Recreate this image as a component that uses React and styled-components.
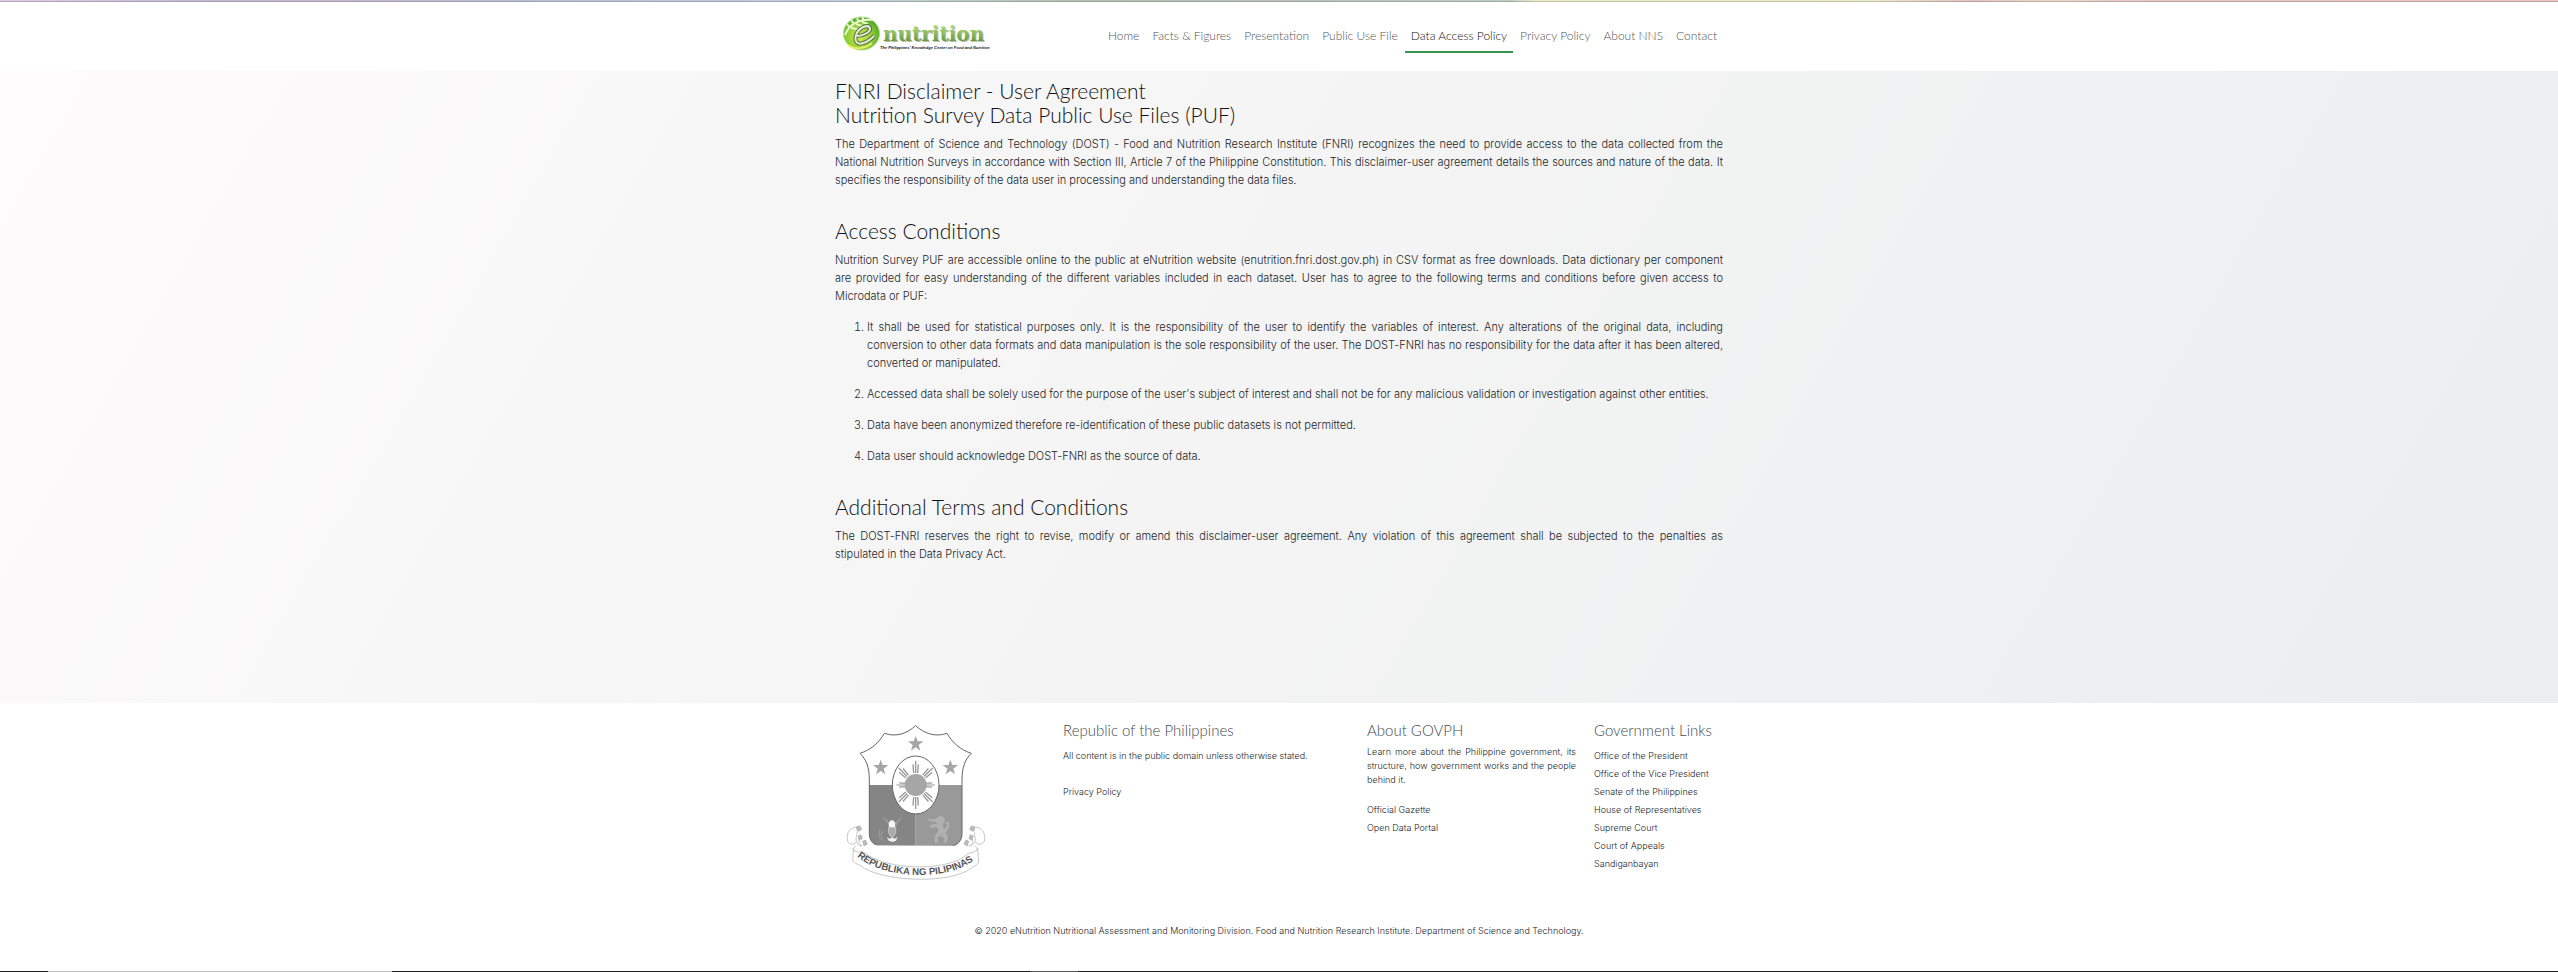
import React from "react";
import styled, { createGlobalStyle } from "styled-components";

const GlobalStyle = createGlobalStyle`
  *, *::before, *::after { box-sizing: border-box; }
  body {
    margin: 0;
    background: #fff;
    color: #212529;
    font-family: "Inter", "Open Sans", sans-serif;
    font-size: 11px;
    font-weight: 300;
    line-height: 18px;
  }
`;

const Page = styled.div`
  display: flex;
  flex-direction: column;
  min-height: 100vh;
`;

const TopRibbon = styled.div`
  height: 2px;
  border-bottom: 1px solid rgba(100, 90, 80, 0.3);
  background: linear-gradient(
    90deg,
    #dfcbe8 0%, #c5bbdc 7%, #c4b8cc 13%, #b9bfdc 20%, #c2c9e6 30%,
    #bcd0cf 36%, #b4c2b4 42%, #b9c3bd 50%, #bdcfc4 59%, #e9edc8 60%,
    #eeedcf 73%, #e2c1c1 77%, #ecd8cc 80%, #e6c6c6 84%, #e8c5c6 100%
  );
`;

const Container = styled.div`
  width: 100%;
  max-width: 912px;
  margin: 0 auto;
  padding: 0 12px;
`;

const Header = styled.header`
  background: #fff;
`;

const HeaderRow = styled(Container)`
  display: flex;
  align-items: center;
  justify-content: space-between;
  min-height: 69px;
`;

const Brand = styled.a`
  display: block;
  margin-left: 8px;
`;

const NavList = styled.ul`
  display: flex;
  gap: 1px;
  margin: 0;
  padding: 0;
  list-style: none;
`;

const NavLink = styled.a`
  display: block;
  padding: 6px 6px 5px;
  border-bottom: 2px solid ${(p) => (p.$active ? "#38924f" : "transparent")};
  color: ${(p) => (p.$active ? "#111" : "#555")};
  font-family: "Lato", sans-serif;
  font-size: 12px;
  line-height: 20px;
  text-decoration: none;
  white-space: nowrap;
`;

const Main = styled.main`
  flex: 1;
  padding: 8px 0 100px;
  background: linear-gradient(120deg, #fdfbfb 0%, #ebedee 100%);
`;

const Section = styled.section`
  margin-bottom: 30px;
`;

const Title = styled.h2`
  margin: 0 0 8px;
  color: #111;
  font-family: "Lato", sans-serif;
  font-size: 21px;
  font-weight: 300;
  line-height: 24px;
`;

const Paragraph = styled.p`
  margin: 0 0 13px;
  text-align: justify;
`;

const Terms = styled.ol`
  margin: 0;
  padding-left: 32px;
`;

const Term = styled.li`
  margin-bottom: 13px;
  text-align: justify;
`;

const Footer = styled.footer`
  background: #fff;
  font-size: 9px;
`;

const FooterRow = styled(Container)`
  display: grid;
  grid-template-columns: 228px 304px 227px 1fr;
  min-height: 200px;
  padding-top: 18px;
`;

const SealCell = styled.div`
  padding: 3px 0 0 7px;
`;

const FooterColumn = styled.div`
  padding-right: ${(p) => (p.$narrow ? "18px" : "0")};
`;

const FooterTitle = styled.h5`
  margin: 0 0 ${(p) => (p.$tight ? "6px" : "8px")};
  color: #444b52;
  font-family: "Lato", sans-serif;
  font-size: 15px;
  font-weight: 300;
  line-height: 18px;
`;

const FooterText = styled.p`
  margin: 0 0 ${(p) => (p.$compact ? "14px" : "18px")};
  line-height: ${(p) => (p.$compact ? "14px" : "18px")};
  text-align: justify;
`;

const LinkList = styled.ul`
  margin: 0;
  padding: 0;
  list-style: none;
`;

const FooterLink = styled.a`
  color: inherit;
  text-decoration: none;
`;

const Copyright = styled.p`
  margin: 0;
  padding: 19px 12px 31px;
  text-align: center;
`;

const PageEdge = styled.div`
  height: 1px;
  background: linear-gradient(90deg, #1d1d1d 48px, #c0c0c0 48px 392px, #1d1d1d 392px 1030px, #555 1030px 1078px, #1d1d1d 1078px);
`;

function Logo() {
  return (
    <svg width="150" height="36" viewBox="0 0 150 36" role="img" aria-label="eNutrition">
      <defs>
        <radialGradient id="ball" cx="0.45" cy="0.6" r="0.6">
          <stop offset="0" stopColor="#d9e94e" />
          <stop offset="0.6" stopColor="#8fce35" />
          <stop offset="1" stopColor="#4fa32c" />
        </radialGradient>
        <linearGradient id="word" x1="0" y1="0" x2="0" y2="1">
          <stop offset="0.2" stopColor="#a9d672" />
          <stop offset="1" stopColor="#55852f" />
        </linearGradient>
      </defs>
      <ellipse cx="18.500" cy="17.500" rx="18" ry="16.500" fill="url(#ball)" stroke="#a6dc7c" />
      <path d="M2 19C7 7 18 3 30 4M7 12l-3-4M11 8l-3-4M16 6l-2-4M21 4l-2-3M8 12l6 1M13 8l6 2M19 6l6 2" fill="none" stroke="#e9f8ce" strokeWidth="2" />
      <path d="M5 29C12 34 22 33 29 27" fill="none" stroke="#e7ee63" strokeWidth="2" />
      <path d="M14 20C20 20 28 16 27 12C25 8 16 11 13 19C11 26 15 29 20 27C25 26 28 23 31 20" fill="none" stroke="#52703c" strokeWidth="4" />
      <path d="M14 20C20 20 28 16 27 12C25 8 16 11 13 19C11 26 15 29 20 27C25 26 28 23 31 20" fill="none" stroke="#e4eadc" strokeWidth="2" />
      <g fontFamily="'DejaVu Serif', serif" fontWeight="700" fontSize="20">
        <text x="41" y="26" fill="#b9bdb2">nutrition</text>
        <text x="40" y="25" fill="url(#word)">nutrition</text>
      </g>
      <text x="37" y="33" fontFamily="'Liberation Sans', sans-serif" fontWeight="700" fontStyle="italic" fontSize="4" fill="#111">
        The Philippines' Knowledge Center on Food and Nutrition
      </text>
    </svg>
  );
}

const STAR = "M0-24L6-8L23-8L9 3L14 20L0 10L-14 20L-9 3L-23-8L-6-8Z";
const SHIELD = "M257 47C231 71 198 82 163 70C147 98 122 120 90 130C108 148 118 170 118 210V370C118 420 170 405 257 452C344 405 396 420 396 370V210C396 170 406 148 424 130C392 120 367 98 351 70C316 82 283 71 257 47Z";

function Seal() {
  return (
    <svg width="146" height="158" viewBox="36 42 438 474" role="img" aria-label="Republika ng Pilipinas">
      <defs>
        <path id="motto" d="M76 434C150 508 360 518 436 446" />
        <clipPath id="shield"><path d={SHIELD} /></clipPath>
      </defs>
      <g clipPath="url(#shield)">
        <rect x="80" y="40" width="360" height="420" fill="#fff" />
        <rect x="80" y="225" width="177" height="235" fill="#858585" />
        <rect x="257" y="225" width="180" height="235" fill="#999" />
      </g>
      <path d={SHIELD} fill="none" stroke="#666" strokeWidth="3" />
      <ellipse cx="257" cy="225" rx="70" ry="87" fill="#fff" stroke="#666" strokeWidth="3" />
      {[[257, 102], [152, 173], [361, 173]].map(([x, y]) => (
        <path key={x} d={STAR} transform={`translate(${x} ${y})`} fill="#a6a6a6" />
      ))}
      {[0, 45, 90, 135, 180, 225, 270, 315].map((a) => (
        <path key={a} d="M0-36V-72M-6-36L-8-62M6-36L8-62" transform={`translate(257 225) rotate(${a}) scale(${a % 180 === 90 ? 0.8 : 1})`} stroke="#999" strokeWidth="4" fill="none" />
      ))}
      <circle cx="257" cy="225" r="33" fill="#a6a6a6" />
      <g fill="none" stroke="#a2a2a2" strokeWidth="3">
        <path d="M158 322L178 340M216 320L198 340M168 326L180 350M208 328L196 350M150 358C144 376 150 388 160 392M160 362C152 370 154 382 160 386" />
      </g>
      <path d="M176 338Q186 322 196 338L195 352H177Z" fill="#f4f4f4" />
      <path d="M176 352H197V368Q192 380 186 382Q178 378 176 368Z" fill="#aaa" stroke="#ddd" strokeWidth="2" />
      <path d="M170 382L180 386L186 382L194 386L203 380L198 392L188 396L176 392Z" fill="#eee" />
      <path d="M318 326L330 317L342 322L345 334L338 344L342 358L352 348L347 338L356 334L358 350L346 370L354 380L350 396L342 398L344 386L332 376L322 384L324 396L314 398L314 378L326 362L320 350L304 354L298 346L312 342L322 342L318 336L298 334L292 324L304 328Z" fill="#b0b0b0" />
      <g fill="#fff" stroke="#aaa" strokeWidth="2">
        <path d="M98 378C84 378 82 400 96 408C88 410 78 398 78 386L84 352C64 348 48 366 52 390C54 402 70 408 78 396M78 406C68 414 70 438 68 450C70 458 82 462 90 466C150 516 364 524 424 474C434 468 446 464 446 452C444 438 446 420 436 408M66 414C72 424 86 430 98 424C160 480 350 490 416 430C426 430 440 422 448 414M416 378C430 378 432 400 418 408C426 410 436 398 436 386L430 352C450 348 468 366 464 390C462 402 444 408 436 396" />
        <path d="M80 350L90 348L95 358L86 364L80 358ZM84 378L92 374L97 386L88 390ZM98 394L106 390L112 402L102 408ZM434 350L424 348L419 358L428 364L434 358ZM430 378L422 374L417 386L426 390ZM416 394L408 390L402 402L412 408Z" fill="#bbb" />
      </g>
      <text fontFamily="'Liberation Sans', sans-serif" fontWeight="700" fontSize="29" fill="#555">
        <textPath href="#motto" startOffset="50%" textAnchor="middle">REPUBLIKA NG PILIPINAS</textPath>
      </text>
    </svg>
  );
}

const NAV = ["Home", "Facts & Figures", "Presentation", "Public Use File", "Data Access Policy", "Privacy Policy", "About NNS", "Contact"];

const TERMS = [
  "It shall be used for statistical purposes only. It is the responsibility of the user to identify the variables of interest. Any alterations of the original data, including conversion to other data formats and data manipulation is the sole responsibility of the user. The DOST-FNRI has no responsibility for the data after it has been altered, converted or manipulated.",
  "Accessed data shall be solely used for the purpose of the user's subject of interest and shall not be for any malicious validation or investigation against other entities.",
  "Data have been anonymized therefore re-identification of these public datasets is not permitted.",
  "Data user should acknowledge DOST-FNRI as the source of data.",
];

const GOVERNMENT = ["Office of the President", "Office of the Vice President", "Senate of the Philippines", "House of Representatives", "Supreme Court", "Court of Appeals", "Sandiganbayan"];

function Links({ items }) {
  return (
    <LinkList>
      {items.map((item) => (
        <li key={item}><FooterLink href="#">{item}</FooterLink></li>
      ))}
    </LinkList>
  );
}

export default function App() {
  return (
    <>
      <GlobalStyle />
      <Page>
        <TopRibbon />
        <Header>
          <HeaderRow>
            <Brand href="#"><Logo /></Brand>
            <nav>
              <NavList>
                {NAV.map((item) => (
                  <li key={item}>
                    <NavLink href="#" $active={item === "Data Access Policy"}>{item}</NavLink>
                  </li>
                ))}
              </NavList>
            </nav>
          </HeaderRow>
        </Header>
        <Main>
          <Container>
            <Section>
              <Title>FNRI Disclaimer - User Agreement<br />Nutrition Survey Data Public Use Files (PUF)</Title>
              <Paragraph>
                The Department of Science and Technology (DOST) - Food and Nutrition Research Institute (FNRI) recognizes the need to provide access to the data collected from the National Nutrition Surveys in accordance with Section III, Article 7 of the Philippine Constitution. This disclaimer-user agreement details the sources and nature of the data. It specifies the responsibility of the data user in processing and understanding the data files.
              </Paragraph>
            </Section>
            <Section>
              <Title>Access Conditions</Title>
              <Paragraph>
                Nutrition Survey PUF are accessible online to the public at eNutrition website (enutrition.fnri.dost.gov.ph) in CSV format as free downloads. Data dictionary per component are provided for easy understanding of the different variables included in each dataset. User has to agree to the following terms and conditions before given access to Microdata or PUF:
              </Paragraph>
              <Terms>
                {TERMS.map((term) => <Term key={term}>{term}</Term>)}
              </Terms>
            </Section>
            <section>
              <Title>Additional Terms and Conditions</Title>
              <Paragraph>
                The DOST-FNRI reserves the right to revise, modify or amend this disclaimer-user agreement. Any violation of this agreement shall be subjected to the penalties as stipulated&nbsp;in the Data Privacy Act.
              </Paragraph>
            </section>
          </Container>
        </Main>
        <Footer>
          <FooterRow>
            <SealCell><Seal /></SealCell>
            <FooterColumn>
              <FooterTitle>Republic of the Philippines</FooterTitle>
              <FooterText>All content is in the public domain unless otherwise stated.</FooterText>
              <Links items={["Privacy Policy"]} />
            </FooterColumn>
            <FooterColumn $narrow>
              <FooterTitle $tight>About GOVPH</FooterTitle>
              <FooterText $compact>Learn more about the Philippine government, its structure, how government works and the people behind it.</FooterText>
              <Links items={["Official Gazette", "Open Data Portal"]} />
            </FooterColumn>
            <FooterColumn>
              <FooterTitle>Government Links</FooterTitle>
              <Links items={GOVERNMENT} />
            </FooterColumn>
          </FooterRow>
          <Copyright>© 2020 eNutrition Nutritional Assessment and Monitoring Division. Food and Nutrition Research Institute. Department of Science and Technology.</Copyright>
        </Footer>
        <PageEdge />
      </Page>
    </>
  );
}
